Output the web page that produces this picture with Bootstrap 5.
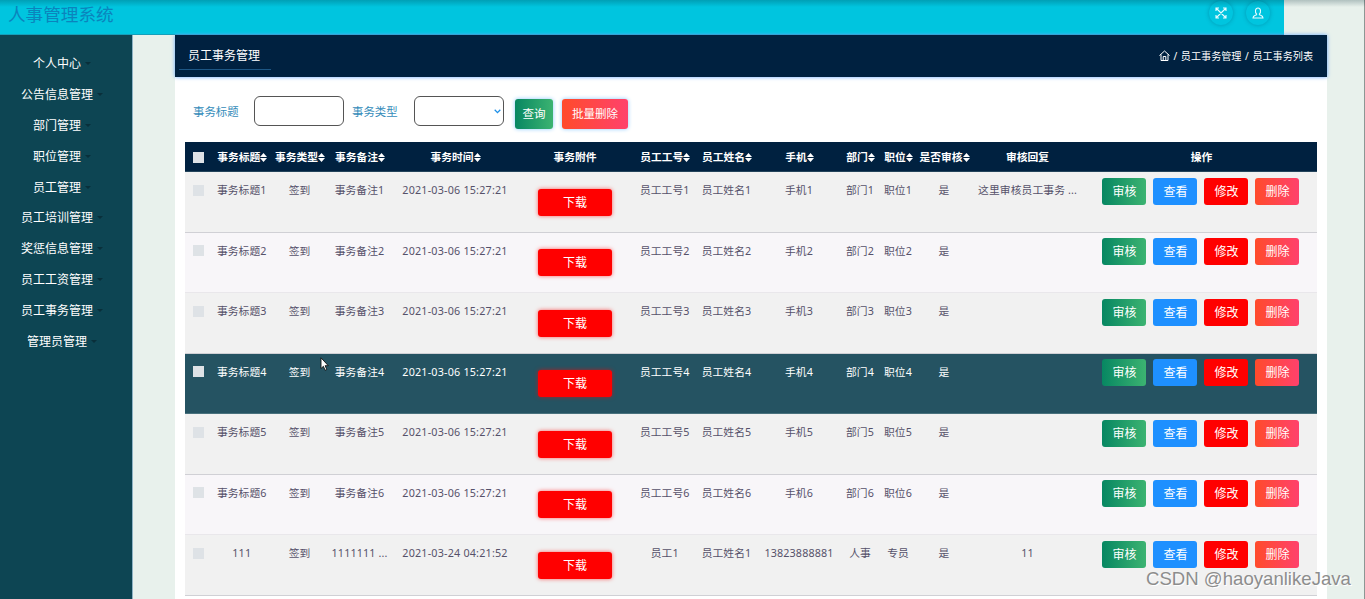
<!DOCTYPE html>
<html lang="zh-CN">
<head>
<meta charset="utf-8">
<title>人事管理系统</title>
<link href="https://cdn.jsdelivr.net/npm/bootstrap@5.3.0/dist/css/bootstrap.min.css" rel="stylesheet">
<style>
html,body{height:599px;overflow:hidden}
body{background:#e8f1ec;font-family:"Noto Sans","Noto Sans CJK SC",sans-serif;font-size:10.75px;line-height:16px;color:#56516a;position:relative}
.topbar{height:35px;width:1284px;background:#00c5df;border-bottom:1px solid #159fba;padding:0 14px 0 8px}
.topshade{position:absolute;inset:0 0 auto 0;height:7px;background:linear-gradient(rgba(0,40,50,.24),transparent);z-index:3}
.brand{font-size:17.6px;line-height:28px;color:#0b84bc}
.round-btn{width:24px;height:24px;border-radius:50%;box-shadow:0 0 4px rgba(0,70,100,.35);margin-top:1px;color:#e8fbff}
.sidebar{width:133px;height:564px;background:#0d4553;border-right:1px solid #8db2c4;padding:14px 8px 0 0}
.sidebar a{height:30.8px;font-size:12px;color:#fff;text-decoration:none;gap:4px}
.sidebar a i{border:3px solid transparent;border-top-color:#092f3a;border-bottom:0;margin-top:-1px}
.panel{width:1152px;margin-left:42px;background:#fff;height:564px}
.panel-head{height:42px;background:#002140;box-shadow:0 0 4px #65a8ff;color:#fff;padding:0 14px 0 4px}
.panel-title{width:92px;height:35px;border-bottom:1px solid #1d5684;padding-left:9px;font-size:12px;line-height:42px}
.crumbs{font-size:10.1px;gap:3px;word-spacing:1px}
.search{height:65px;padding:19px 0 0 18px;color:#358cba;font-size:11.4px}
.search label{line-height:31px}
.field{width:90px;height:30px;border:1px solid #555;border-radius:6px;background:#fff;padding:0 2px}
.act{border:0;border-radius:3px;color:#fff;font-size:12px;line-height:16px;padding:0;text-align:center}
.search .act{height:30px;box-shadow:0 0 4px #8ac9ff;margin-top:3px;font-size:11.5px}
.g-green{background:linear-gradient(90deg,#078762,#3cb371)}
.g-pink{background:linear-gradient(90deg,#ff4b2b,#ff416c)}
.g-blue{background:#1e90ff}.g-red{background:#f00}
.grid-table{width:1132px;margin:0 10px;table-layout:fixed;border-collapse:separate;border-spacing:0;text-align:center;white-space:nowrap}
.grid-table th{height:30px;background:#002140;color:#fff;padding:0;vertical-align:middle;font-weight:700;border-bottom:1px solid #24445b}
.grid-table td{height:60.5px;padding:10px 0 0;vertical-align:top;background:#f1f1f1;border-bottom:1px solid #d0d0d5}
.grid-table tr:nth-child(even) td{background:#f8f6f9;border-bottom-color:#e9e7eb}
.grid-table tr.hovered td{background:#255362;color:#fff;border-bottom-color:#49717d}
.grid-table tr:first-child td{border-bottom-color:#d0d0d5}
.sq{display:block;width:11px;height:11px;background:#dee2e6;margin:2.5px auto 0 8px}
th .sq{margin-top:1px}
.num{letter-spacing:.12px}
.date{letter-spacing:.2px}
.down{width:73.5px;height:27px;margin:6.5px auto 0;display:block;box-shadow:0 0 4px rgba(255,0,0,.6);line-height:28px}
.ops{gap:7px;padding-left:16.4px;margin-top:-4.4px}
.ops .act{width:44px;height:27px;line-height:27px}
.pointer{position:absolute;left:320px;top:357px}
.watermark{position:absolute;left:1146px;top:567px;font:18.6px/24px "Liberation Sans",sans-serif;color:#8d8d8d;text-shadow:1px 1px 0 #fff;white-space:nowrap}
.edge{position:absolute;right:0;top:0;width:1px;height:599px;background:#8c9794}
</style>
<script src="https://cdn.jsdelivr.net/npm/bootstrap@5.3.0/dist/js/bootstrap.bundle.min.js"></script>
</head>
<body>
<div class="topshade"></div>
<header class="topbar d-flex justify-content-between">
  <div class="brand">人事管理系统</div>
  <div class="d-flex" style="gap:13px">
    <span class="round-btn d-flex align-items-center justify-content-center"><svg width="12" height="12" viewBox="0 0 12 12" fill="none" stroke="currentColor" stroke-width="1.1"><path d="M1 4V1h3M1 1l10 10M8 11h3V8M8 1h3v3M11 1L1 11M1 8v3h3"/></svg></span>
    <span class="round-btn d-flex align-items-center justify-content-center"><svg width="12" height="12" viewBox="0 0 12 12" fill="none" stroke="currentColor" stroke-width="1.1"><path d="M4.7 7.2C2.6 5.4 3.2 1 6 1s3.4 4.4 1.3 6.2C7.3 8.7 11 8 11 11H1c0-3 3.7-2.3 3.7-3.8z"/></svg></span>
  </div>
</header>
<div class="d-flex">
  <nav class="sidebar flex-shrink-0" id="menu"></nav>
  <main class="panel flex-shrink-0">
    <div class="panel-head d-flex justify-content-between">
      <div class="panel-title">员工事务管理</div>
      <div class="crumbs d-flex align-items-center"><svg width="11" height="11" viewBox="0 0 11 11" fill="none" stroke="#fff" style="margin-top:-2px"><path d="M.5 5.5L5.5 1l5 4.5M2 4.5v6h7v-6M4.2 10.5v-4h2.6v4"/></svg><span>/ 员工事务管理 / 员工事务列表</span></div>
    </div>
    <form class="search d-flex align-items-start">
      <label style="width:61px">事务标题</label>
      <div class="field"></div>
      <label style="width:62px;margin-left:8px">事务类型</label>
      <div class="field d-flex align-items-center justify-content-end"><svg width="7" height="5" viewBox="0 0 7 5" fill="none" stroke="#1e90e8" stroke-width="1.3"><path d="M.7.8l2.8 2.8L6.3.8"/></svg></div>
      <button type="button" class="act g-green" style="width:38px;margin-left:11px">查询</button>
      <button type="button" class="act g-pink" style="width:66px;margin-left:9px">批量删除</button>
    </form>
    <table class="grid-table">
      <colgroup id="cols"></colgroup>
      <thead><tr id="head"></tr></thead>
      <tbody id="rows"></tbody>
    </table>
  </main>
</div>
<svg class="pointer" width="9" height="14" viewBox="0 0 9 14"><path d="M1 .8v10.7l2.4-2.2 1.7 4 1.7-.8-1.7-3.8h3.2z" fill="#fff" stroke="#111" stroke-width=".9"/></svg>
<div class="watermark">CSDN @haoyanlikeJava</div>
<div class="edge"></div>
<script>
const byId = id => document.getElementById(id);
byId('menu').innerHTML = ['个人中心','公告信息管理','部门管理','职位管理','员工管理','员工培训管理','奖惩信息管理','员工工资管理','员工事务管理','管理员管理']
  .map(t => `<a href="#" class="d-flex align-items-center justify-content-center">${t}<i></i></a>`).join('');
byId('cols').innerHTML = [27,59.5,56,64,127,113,66.5,57,88,34,42,50,117,231].map(w => `<col style="width:${w}px">`).join('');
const sort = '<svg width="7" height="9" viewBox="0 0 7 9" fill="#fff" style="margin-right:-1px"><path d="M0 3.9L3.5 0 7 3.9zM0 5.1h7L3.5 9z"/></svg>';
byId('head').innerHTML = '<th><span class="sq"></span></th>' +
  ['事务标题','事务类型','事务备注','事务时间','事务附件','员工工号','员工姓名','手机','部门','职位','是否审核','审核回复','操作']
  .map(t => `<th>${t}${['事务附件','审核回复','操作'].includes(t) ? '' : sort}</th>`).join('');
const data = [1,2,3,4,5,6].map(n => ['事务标题'+n,'签到','事务备注'+n,'2021-03-06 15:27:21','员工工号'+n,'员工姓名'+n,'手机'+n,'部门'+n,'职位'+n,'是',n === 1 ? '这里审核员工事务 ...' : '']);
data.push(['111','签到','1111111 ...','2021-03-24 04:21:52','员工1','员工姓名1','13823888881','人事','专员','是','11']);
byId('rows').innerHTML = data.map((r, i) => {
  const cells = r.map((c, k) => `<td class="${k === 3 ? 'date' : 'num'}">${c}</td>`);
  cells.splice(4, 0, '<td><button class="act g-red down">下载</button></td>');
  return `<tr class="${i === 3 ? 'hovered' : ''}"><td><span class="sq"></span></td>${cells.join('')}<td><div class="ops d-flex"><button class="act g-green">审核</button><button class="act g-blue">查看</button><button class="act g-red">修改</button><button class="act g-pink">删除</button></div></td></tr>`;
}).join('');
</script>
</body>
</html>
